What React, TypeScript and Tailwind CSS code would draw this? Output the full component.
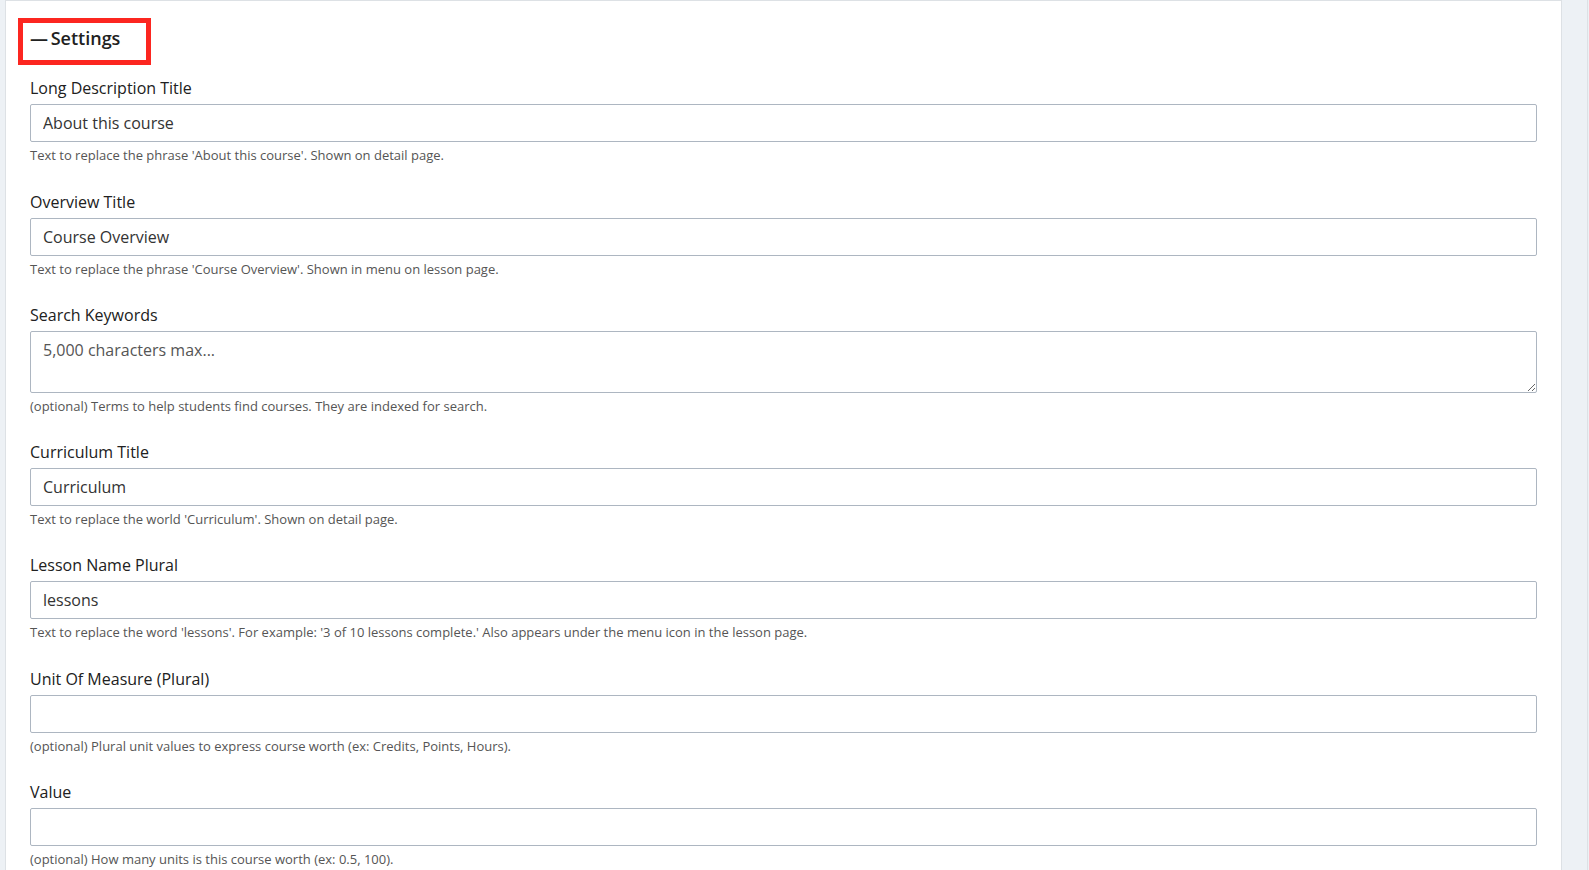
import { useState } from "react";

type Field = {
  label: string;
  value: string;
  help: string;
  placeholder?: string;
  multiline?: boolean;
};

const fields: Field[] = [
  {
    label: "Long Description Title",
    value: "About this course",
    help: "Text to replace the phrase 'About this course'. Shown on detail page.",
  },
  {
    label: "Overview Title",
    value: "Course Overview",
    help: "Text to replace the phrase 'Course Overview'. Shown in menu on lesson page.",
  },
  {
    label: "Search Keywords",
    value: "",
    placeholder: "5,000 characters max...",
    multiline: true,
    help: "(optional) Terms to help students find courses. They are indexed for search.",
  },
  {
    label: "Curriculum Title",
    value: "Curriculum",
    help: "Text to replace the world 'Curriculum'. Shown on detail page.",
  },
  {
    label: "Lesson Name Plural",
    value: "lessons",
    help: "Text to replace the word 'lessons'. For example: '3 of 10 lessons complete.' Also appears under the menu icon in the lesson page.",
  },
  {
    label: "Unit Of Measure (Plural)",
    value: "",
    help: "(optional) Plural unit values to express course worth (ex: Credits, Points, Hours).",
  },
  {
    label: "Value",
    value: "",
    help: "(optional) How many units is this course worth (ex: 0.5, 100).",
  },
];

function SettingsField({ field }: { field: Field }) {
  const [value, setValue] = useState(field.value);
  const inputClass =
    "block w-full rounded-[2px] border border-[#adb6c1] bg-white px-3 py-[6px] text-[16px] leading-6 text-[#333] placeholder:text-[#555] outline-none focus:border-[#7b93b0]";

  return (
    <div className={field.multiline ? "mb-[23px]" : "mb-6"}>
      <label className="mb-1 block text-[16px] leading-6 text-[#212121]">
        {field.label}
      </label>
      {field.multiline ? (
        <textarea
          rows={2}
          value={value}
          placeholder={field.placeholder}
          onChange={(e) => setValue(e.target.value)}
          className={inputClass + " h-[62px] resize-y"}
        />
      ) : (
        <input
          type="text"
          value={value}
          onChange={(e) => setValue(e.target.value)}
          className={inputClass + " h-[38px]"}
        />
      )}
      <p className="mt-1 text-[13px] leading-[19.5px] text-[#555]">
        {field.help}
      </p>
    </div>
  );
}

export default function App() {
  return (
    <div
      className="flex h-[870px] overflow-hidden bg-[#edf1f5] pl-[5px]"
      style={{ fontFamily: '"Open Sans", "Noto Sans", sans-serif' }}
    >
      <div className="w-[1557px] shrink-0 border border-b-0 border-[#dde1e5] bg-white px-6 pt-[17px]">
        <div className="-ml-[12px] mb-[11px] h-[47px] w-[133px] border-[5px] border-[#fc2620] pl-[7px] pt-[2px]">
          <h2 className="text-[18px] font-semibold leading-[27px] text-[#212121]">
            <span className="mr-[-2px]">—</span> Settings
          </h2>
        </div>

        {fields.map((f) => (
          <SettingsField key={f.label} field={f} />
        ))}
      </div>
      <div className="flex-1" />
      <div className="w-[2px] border-l border-[#dde1e5]" />
    </div>
  );
}
